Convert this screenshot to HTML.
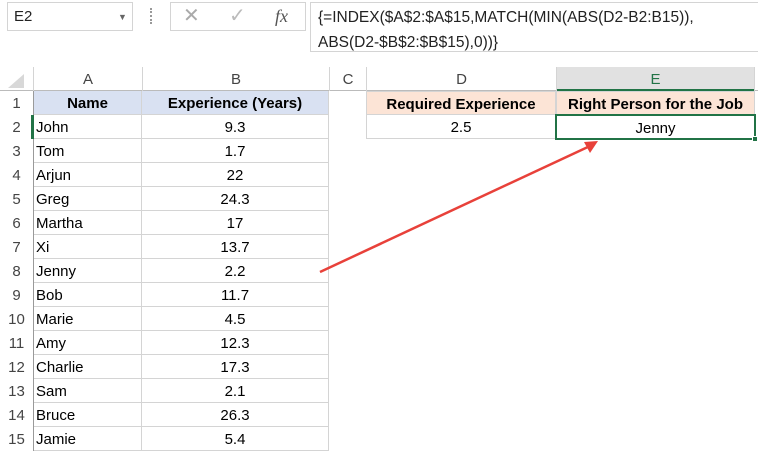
<!DOCTYPE html>
<html><head><meta charset="utf-8"><style>
*{margin:0;padding:0;box-sizing:border-box}
body{width:758px;height:451px;background:#fff;position:relative;overflow:hidden;font-family:"Liberation Sans",Calibri,sans-serif;font-size:15px;color:#000}
.a{position:absolute}
.c{position:absolute;height:24px;line-height:26px;white-space:nowrap;overflow:hidden}
</style></head><body>
<div class="a" style="left:7px;top:2px;width:126px;height:29px;border:1px solid #d4d4d4;font-size:15px;line-height:28px;padding-left:6px;color:#222">E2<span class="a" style="left:110px;top:0;font-size:9px;color:#666">▼</span></div>
<div class="a" style="left:150px;top:8px;width:3px;height:16px;border-left:2px dotted #999"></div>
<div class="a" style="left:170px;top:2px;width:136px;height:29px;border:1px solid #d4d4d4;color:#aaa;font-size:20px;line-height:27px">
<span class="a" style="left:12px">✕</span><span class="a" style="left:58px;color:#bbb">✓</span><span class="a" style="left:104px;font-family:'Liberation Serif',serif;font-style:italic;color:#555;font-size:18px">fx</span></div>
<div class="a" style="left:310px;top:2px;width:450px;height:50px;border:1px solid #d4d4d4;font-size:15.5px;line-height:25px;padding-left:7px;padding-top:2px;color:#222">{=INDEX($A$2:$A$15,MATCH(MIN(ABS(D2-B2:B15)),<br>ABS(D2-$B$2:$B$15),0))}</div>
<div class="a" style="left:0;top:67px;width:758px;height:24px;background:#fff;border-bottom:1px solid #bbb"></div>
<div class="a" style="left:556px;top:67px;width:199px;height:24px;background:#e1e1e1;border-bottom:2px solid #217346"></div>
<div class="a" style="left:8px;top:74px;width:0;height:0;border-left:16px solid transparent;border-bottom:14px solid #d8d8d8"></div>
<div class="c" style="left:33px;top:67px;width:109px;text-align:center;color:#444;border-left:1px solid #d4d4d4">A</div>
<div class="c" style="left:142px;top:67px;width:187px;text-align:center;color:#444;border-left:1px solid #d4d4d4">B</div>
<div class="c" style="left:329px;top:67px;width:37px;text-align:center;color:#444;border-left:1px solid #d4d4d4">C</div>
<div class="c" style="left:366px;top:67px;width:190px;text-align:center;color:#444;border-left:1px solid #d4d4d4">D</div>
<div class="c" style="left:556px;top:67px;width:199px;text-align:center;color:#217346;border-left:1px solid #d4d4d4;border-right:1px solid #d4d4d4">E</div>
<div class="a" style="left:33px;top:91px;width:1px;height:360px;background:#9a9a9a"></div>
<div class="a" style="left:31px;top:115px;width:3px;height:24px;background:#217346"></div>
<div class="c" style="left:0;top:91px;width:33px;text-align:center;color:#444">1</div>
<div class="c" style="left:34px;top:91px;width:108px;background:#d9e1f2;font-weight:bold;text-align:center;border-right:1px solid #d4d4d4;border-bottom:1px solid #d4d4d4">Name</div>
<div class="c" style="left:142px;top:91px;width:187px;background:#d9e1f2;font-weight:bold;text-align:center;border-right:1px solid #d4d4d4;border-bottom:1px solid #d4d4d4">Experience (Years)</div>
<div id="rows"></div>
<div class="c" style="left:366px;top:91px;width:190px;background:#fce4d6;font-weight:bold;text-align:center;border:1px solid #d4d4d4">Required Experience</div>
<div class="c" style="left:556px;top:91px;width:199px;background:#fce4d6;font-weight:bold;text-align:center;border:1px solid #d4d4d4">Right Person for the Job</div>
<div class="c" style="left:366px;top:115px;width:190px;text-align:center;border:1px solid #d4d4d4;border-top:none">2.5</div>
<div class="c" style="left:555px;top:114px;width:201px;height:26px;line-height:25px;text-align:center;border:2px solid #217346">Jenny</div>
<div class="a" style="left:752px;top:136px;width:6px;height:6px;background:#217346;border:1px solid #fff"></div>
<svg class="a" style="left:0;top:0" width="758" height="451"><line x1="320" y1="272" x2="590" y2="146" stroke="#e8413a" stroke-width="2.5"/><polygon points="598,141 584,142 590,153" fill="#e8413a"/></svg>
<script>
var d=[["John","9.3"],["Tom","1.7"],["Arjun","22"],["Greg","24.3"],["Martha","17"],["Xi","13.7"],["Jenny","2.2"],["Bob","11.7"],["Marie","4.5"],["Amy","12.3"],["Charlie","17.3"],["Sam","2.1"],["Bruce","26.3"],["Jamie","5.4"]];
var h="";d.forEach(function(r,i){var t=115+i*24;
h+='<div class="c" style="left:0;top:'+t+'px;width:33px;text-align:center;color:#444">'+(i+2)+'</div>';
h+='<div class="c" style="left:34px;top:'+t+'px;width:108px;padding-left:2px;border-right:1px solid #d4d4d4;border-bottom:1px solid #d4d4d4">'+r[0]+'</div>';
h+='<div class="c" style="left:142px;top:'+t+'px;width:187px;text-align:center;border-right:1px solid #d4d4d4;border-bottom:1px solid #d4d4d4">'+r[1]+'</div>';});
document.getElementById("rows").outerHTML=h;
</script>
</body></html>
